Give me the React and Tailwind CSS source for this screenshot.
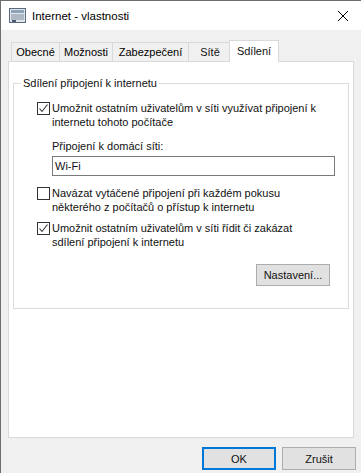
import React from "react";

function Check({ checked }) {
  return (
    <div className="w-[13px] h-[13px] border border-[#333333] bg-white shrink-0 flex items-center justify-center">
      {checked && (
        <svg width="11" height="11" viewBox="0 0 11 11">
          <polyline points="1.5,5.5 4,8.5 9.5,1.5" fill="none" stroke="#333333" strokeWidth="1.1" />
        </svg>
      )}
    </div>
  );
}

function Tab({ label, w }) {
  return (
    <div
      className={`h-[19px] border-l border-t border-[#d9d9d9] bg-[#f0f0f0] flex items-center justify-center text-black ${w}`}
    >
      {label}
    </div>
  );
}

export default function App() {
  return (
    <div
      className="w-[361px] h-[473px] bg-[#f0f0f0] border-l border-t border-[#6e6e6e] flex flex-col text-[11px] leading-[14px] text-[#111111] overflow-hidden"
      style={{ fontFamily: '"Liberation Sans", Arial, sans-serif' }}
    >
      {/* Title bar */}
      <div className="h-[29px] bg-white flex items-center shrink-0">
        <svg className="ml-[8px]" width="17" height="15" viewBox="0 0 17 15">
          <rect x="0.5" y="0.5" width="16" height="14" fill="#dfe6ee" stroke="#5a6a7c" />
          <rect x="2" y="2" width="13" height="3" fill="#8ea2b8" />
          <line x1="2" y1="7" x2="15" y2="7" stroke="#7f8c9b" />
          <line x1="2" y1="9" x2="15" y2="9" stroke="#7f8c9b" />
          <line x1="2" y1="11" x2="15" y2="11" stroke="#7f8c9b" />
          <rect x="3" y="12" width="4" height="2" fill="#4a5c70" />
        </svg>
        <span className="ml-[6px] text-[11.5px] text-black">Internet - vlastnosti</span>
        <svg className="ml-auto mr-[13px]" width="10" height="10" viewBox="0 0 10 10">
          <line x1="0" y1="0" x2="10" y2="10" stroke="#000" strokeWidth="1" />
          <line x1="10" y1="0" x2="0" y2="10" stroke="#000" strokeWidth="1" />
        </svg>
      </div>

      {/* Tabs */}
      <div className="flex items-end mt-[10px] ml-[10px] h-[21px] relative z-10">
        <Tab label="Obecné" w="w-[48px]" />
        <Tab label="Možnosti" w="w-[53px]" />
        <Tab label="Zabezpečení" w="w-[76px]" />
        <div className="h-[19px] border-l border-t border-[#d9d9d9] bg-[#f0f0f0] flex items-center justify-center w-[43px] -mr-[2px]">
          Sítě
        </div>
        <div className="h-[22px] -mb-px w-[50px] border-l border-t border-r border-[#d9d9d9] bg-white flex items-start justify-center pt-[3px]">
          Sdílení
        </div>
      </div>

      {/* Panel */}
      <div className="ml-[7px] w-[346px] h-[377px] bg-white border border-[#d9d9d9] px-[4px] pt-[14px]">
        <fieldset className="border border-[#dcdcdc] pb-[22px]">
          <legend className="ml-[7px] px-[2px]">Sdílení připojení k internetu</legend>
          <div className="pl-[23px] pt-[11px]">
            <div className="flex gap-[2px]">
              <div className="pt-[1px]"><Check checked /></div>
              <div>
                Umožnit ostatním uživatelům v síti využívat připojení k<br />
                internetu tohoto počítače
              </div>
            </div>
            <div className="pl-[15px] mt-[10px]">Připojení k domácí síti:</div>
            <div className="ml-[15px] mt-[3px] w-[283px] h-[20px] border border-[#7a7a7a] flex items-center pl-[2px]">
              Wi-Fi
            </div>
            <div className="flex gap-[2px] mt-[10px]">
              <div className="pt-[1px]"><Check /></div>
              <div>
                Navázat vytáčené připojení při každém pokusu<br />
                některého z počítačů o přístup k internetu
              </div>
            </div>
            <div className="flex gap-[2px] mt-[7px]">
              <div className="pt-[1px]"><Check checked /></div>
              <div>
                Umožnit ostatním uživatelům v síti řídit či zakázat<br />
                sdílení připojení k internetu
              </div>
            </div>
            <div className="flex justify-end pr-[18px] mt-[15px]">
              <div className="w-[74px] h-[22px] bg-[#e1e1e1] border border-[#adadad] flex items-center justify-center">
                Nastavení...
              </div>
            </div>
          </div>
        </fieldset>
      </div>

      {/* Buttons */}
      <div className="flex justify-end gap-[6px] mr-[5px] mt-[9px]">
        <div className="w-[74px] h-[23px] bg-[#e1e1e1] border-2 border-[#0078d7] flex items-center justify-center">
          OK
        </div>
        <div className="w-[74px] h-[23px] bg-[#e1e1e1] border border-[#adadad] flex items-center justify-center">
          Zrušit
        </div>
      </div>
    </div>
  );
}
